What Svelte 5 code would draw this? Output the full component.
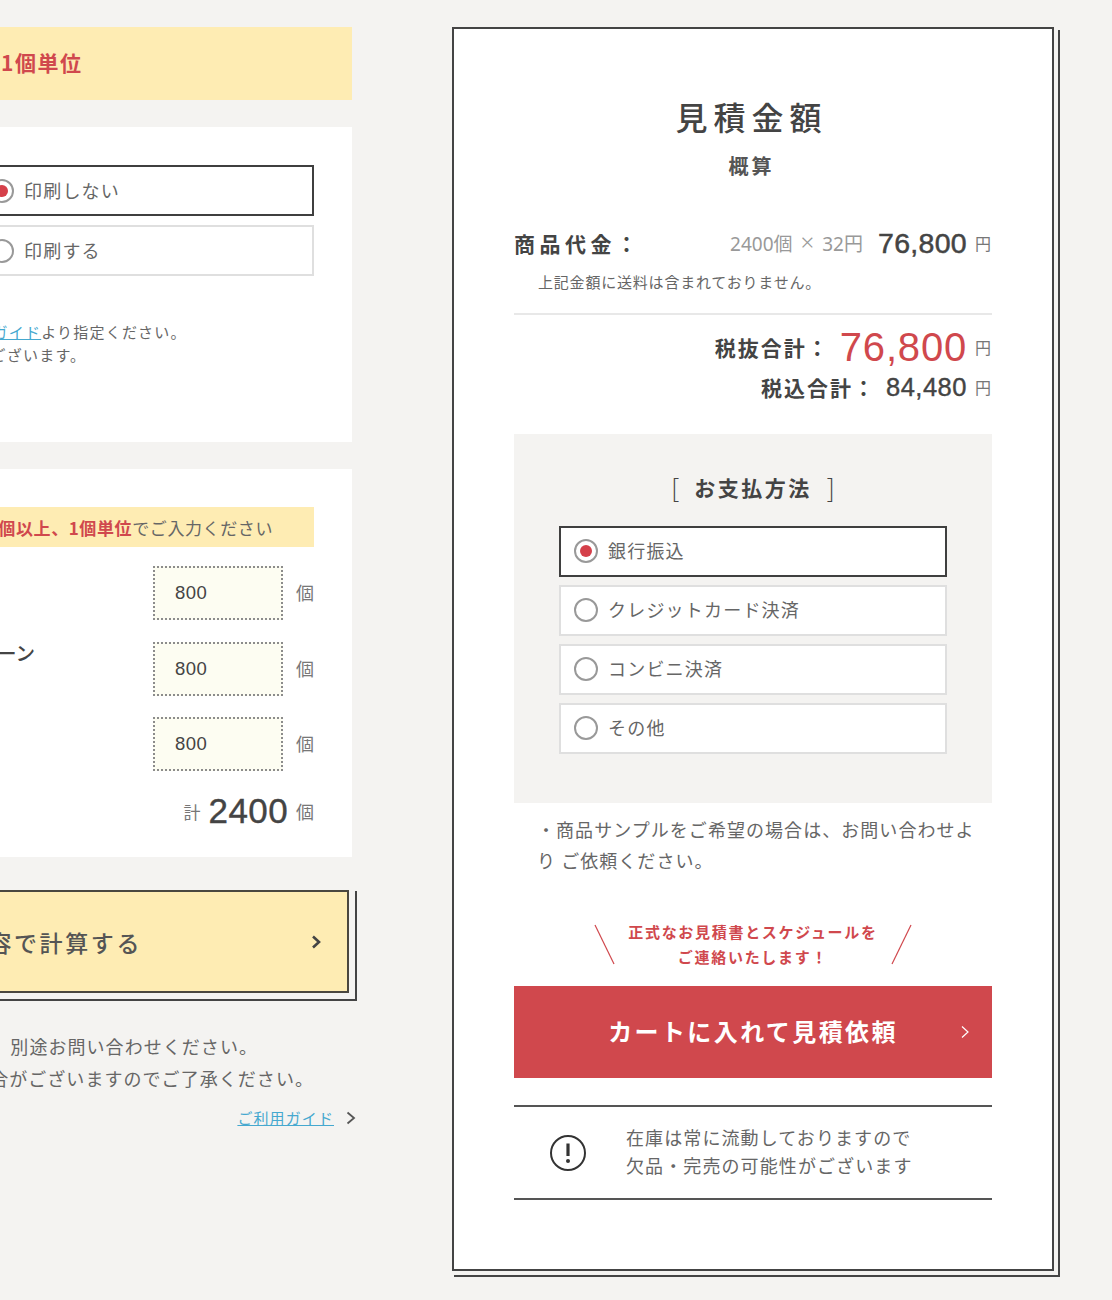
<script>
  const quantities = [800, 800, 800];

  const payments = ['銀行振込', 'クレジットカード決済', 'コンビニ決済', 'その他'];
</script>

<div class="page">
  <div class="left">
    <div class="banner">
      <span class="banner-text">1個単位</span>
    </div>

    <section class="panel print">
      <div class="option selected wide">
        <span class="radio on"></span>
        <span>印刷しない</span>
      </div>
      <div class="option wide">
        <span class="radio"></span>
        <span>印刷する</span>
      </div>
      <p class="print-note">
        <span class="line l1"><a href="#guide">ご利用ガイド</a>より指定ください。</span>
        <span class="line l2">場合がございます。</span>
      </p>
    </section>

    <section class="panel qty">
      <div class="strip"><b>100個以上、1個単位</b>でご入力ください</div>
      <div class="qty-rows">
        <div class="qty-names"><span>ブルーグリーン</span></div>
        <div class="qty-inputs">
          {#each quantities as q}
            <div class="qty-row">
              <input class="num" type="text" value={q} />
              <span class="unit">個</span>
            </div>
          {/each}
        </div>
      </div>
      <div class="qty-total">
        <span class="total-label">計</span>
        <span class="total-num">2400</span>
        <span class="unit">個</span>
      </div>
    </section>

    <button class="calc">
      <span>この内容で計算する</span>
      <svg width="12" height="16" viewBox="0 0 12 16"><path d="M3 2.5 L9 8 L3 13.5" fill="none" stroke="#444" stroke-width="2.6" /></svg>
    </button>

    <div class="foot">
      <p class="f1">別途お問い合わせください。</p>
      <p class="f2">場合がございますのでご了承ください。</p>
      <div class="guide">
        <a href="#guide">ご利用ガイド</a>
        <svg width="12" height="16" viewBox="0 0 12 16"><path d="M2.5 2.5 L9 8 L2.5 13.5" fill="none" stroke="#555" stroke-width="1.8" /></svg>
      </div>
    </div>
  </div>

  <aside class="card">
    <h2>見積金額</h2>
    <p class="sub">概算</p>

    <div class="price-row">
      <span class="price-label">商品代金：</span>
      <span class="calc-text">2400個<span class="times">×</span>32円</span>
      <span class="price">76,800</span>
      <span class="yen">円</span>
    </div>
    <p class="ship">上記金額に送料は含まれておりません。</p>

    <div class="sum-row first">
      <span class="sum-label">税抜合計：</span>
      <span class="sum-red">76,800</span>
      <span class="yen">円</span>
    </div>
    <div class="sum-row second">
      <span class="sum-label">税込合計：</span>
      <span class="sum-tax">84,480</span>
      <span class="yen">円</span>
    </div>

    <div class="pay">
      <h3><span>[</span><span>お支払方法</span><span>]</span></h3>
      <div class="pay-list">
        {#each payments as p, i}
          <div class="option" class:selected={i === 0}>
            <span class="radio" class:on={i === 0}></span>
            <span>{p}</span>
          </div>
        {/each}
      </div>
    </div>

    <p class="sample">・商品サンプルをご希望の場合は、お問い合わせより ご依頼ください。</p>

    <div class="notice">
      <svg width="21" height="41" viewBox="0 0 21 41"><path d="M1 1 L20 40" stroke="#d0484d" stroke-width="1.2" /></svg>
      <p>正式なお見積書とスケジュールを<br />ご連絡いたします！</p>
      <svg width="21" height="41" viewBox="0 0 21 41"><path d="M20 1 L1 40" stroke="#d0484d" stroke-width="1.2" /></svg>
    </div>

    <button class="cart">
      <span>カートに入れて見積依頼</span>
      <svg class="cart-arrow" width="10" height="14" viewBox="0 0 10 14"><path d="M2 1.5 L8 7 L2 12.5" fill="none" stroke="#fff" stroke-width="1.2" /></svg>
    </button>

    <div class="stock">
      <svg width="38" height="38" viewBox="0 0 38 38">
        <circle cx="19" cy="19" r="17" fill="none" stroke="#333" stroke-width="2" />
        <path d="M19 9.5 V22" stroke="#333" stroke-width="3.2" />
        <circle cx="19" cy="27" r="2" fill="#333" />
      </svg>
      <p>在庫は常に流動しておりますので<br />欠品・完売の可能性がございます</p>
    </div>
  </aside>
</div>

<style>
  :global(body) {
    margin: 0;
    background: #f4f3f1;
    font-family: "Noto Sans CJK JP", "Noto Sans", sans-serif;
    color: #444;
  }

  .page {
    width: 1112px;
    height: 1300px;
    overflow: hidden;
    display: flex;
    align-items: flex-start;
    padding-top: 27px;
    box-sizing: border-box;
  }

  .left {
    flex: none;
    width: 352px;
    margin-right: 100px;
  }

  .banner {
    height: 73px;
    background: #feecb3;
    display: flex;
    align-items: center;
    padding: 0 0 4px 1px;
    box-sizing: border-box;
  }

  .banner-text {
    color: #d0484d;
    font-size: 21px;
    font-weight: 700;
    letter-spacing: 1.5px;
  }

  .panel {
    background: #fff;
    position: relative;
  }

  .print {
    margin-top: 27px;
    height: 315px;
    padding: 38px 38px 0 0;
    box-sizing: border-box;
    overflow: hidden;
    display: flex;
    flex-direction: column;
    align-items: flex-end;
    gap: 9px;
  }

  .option {
    display: flex;
    align-items: center;
    gap: 10px;
    height: 50px;
    padding: 0 0 2px 13px;
    box-sizing: border-box;
    border: 2px solid #dfdfdf;
    background: #fff;
    color: #666;
    font-size: 18px;
    letter-spacing: 1.2px;
    flex: none;
  }

  .option .radio {
    margin-top: 2px;
  }

  .option.selected {
    border-color: #3f3f3f;
  }

  .wide {
    width: 339px;
    height: 51px;
  }

  .radio {
    flex: none;
    width: 24px;
    height: 24px;
    border-radius: 50%;
    border: 2px solid #999;
    box-sizing: border-box;
    background: #fff;
    position: relative;
  }

  .radio.on::after {
    content: "";
    position: absolute;
    inset: 4px;
    border-radius: 50%;
    background: #d5404a;
  }

  .print-note {
    align-self: stretch;
    margin: 35px -38px 0 0;
    font-size: 15px;
    line-height: 23px;
    letter-spacing: 1.2px;
    color: #666;
  }

  .line {
    display: block;
    white-space: nowrap;
  }

  .l1 { margin-left: -56px; }
  .l2 { margin-left: -58px; }

  a {
    color: #45a8cf;
    text-decoration: underline;
  }

  .qty {
    margin-top: 27px;
    height: 388px;
    padding: 38px 38px 0 0;
    box-sizing: border-box;
    overflow: hidden;
  }

  .strip {
    height: 40px;
    background: #feecb3;
    display: flex;
    align-items: center;
    justify-content: flex-end;
    padding-right: 41px;
    font-size: 17px;
    letter-spacing: 0.6px;
    color: #666;
    white-space: nowrap;
  }

  .strip b {
    color: #d0484d;
    font-weight: 700;
  }

  .qty-rows {
    display: flex;
    justify-content: space-between;
    align-items: flex-start;
    margin-top: 19px;
  }

  .qty-names {
    display: flex;
    justify-content: flex-end;
    width: 35px;
    overflow: hidden;
    white-space: nowrap;
    font-size: 19.5px;
    font-weight: 500;
    color: #444;
    margin-top: 72px;
  }

  .qty-names span {
    flex: none;
  }

  .qty-inputs {
    display: flex;
    flex-direction: column;
    gap: 21.5px;
  }

  .qty-row {
    display: flex;
    align-items: center;
    gap: 13px;
  }

  .qty-row .unit {
    margin-top: -2px;
  }

  .num {
    width: 130px;
    height: 54px;
    box-sizing: border-box;
    border: 2px dotted #8c8c8c;
    background: #fdfdf2;
    padding: 0 0 0 20px;
    font-family: "Liberation Sans", Arial, sans-serif;
    font-size: 18.5px;
    color: #444;
    letter-spacing: 0.4px;
    outline: none;
    border-radius: 0;
  }

  .unit {
    font-size: 18px;
    color: #777;
    width: 18px;
  }

  .qty-total {
    display: flex;
    justify-content: flex-end;
    align-items: center;
    gap: 8px;
    margin-top: 20px;
  }

  .total-label {
    font-size: 17px;
    color: #777;
  }

  .total-num {
    font-family: "Liberation Sans", Arial, sans-serif;
    font-size: 35px;
    font-weight: 400;
    color: #444;
    -webkit-text-stroke: 0.4px #444;
    letter-spacing: 0.4px;
  }

  .calc {
    display: flex;
    align-items: center;
    justify-content: flex-end;
    width: 349px;
    height: 103px;
    margin: 33px 0 0 0;
    padding: 0 25px 0 0;
    gap: 168px;
    box-sizing: border-box;
    background: #feecb3;
    border: 2px solid #4a473f;
    border-left: none;
    position: relative;
    font-family: inherit;
    font-size: 23px;
    font-weight: 500;
    letter-spacing: 2.6px;
    color: #555;
    white-space: nowrap;
  }

  .calc span,
  .calc svg {
    flex: none;
  }

  .calc::after {
    content: "";
    position: absolute;
    top: -1px;
    left: 0;
    right: -10px;
    bottom: -10px;
    border-right: 2px solid #444;
    border-bottom: 2px solid #444;
    pointer-events: none;
  }

  .foot {
    margin-top: 37px;
    font-size: 18px;
    letter-spacing: 1.05px;
    color: #666;
  }

  .foot p {
    margin: 0;
    line-height: 32px;
    white-space: nowrap;
    display: flex;
    justify-content: flex-end;
  }

  .f1 { padding-right: 94px; }
  .f2 { padding-right: 38px; }

  .guide {
    display: flex;
    justify-content: flex-end;
    align-items: center;
    gap: 11px;
    width: 357px;
    margin-top: 13px;
    font-size: 15px;
    letter-spacing: 1.1px;
  }

  aside.card {
    flex: none;
    width: 602px;
    height: 1244px;
    box-sizing: border-box;
    background: #fff;
    border: 2px solid #444;
    position: relative;
    padding: 0 60px;
  }

  aside.card::after {
    content: "";
    position: absolute;
    top: 1px;
    left: 0;
    right: -8px;
    bottom: -8px;
    border-right: 2px solid #444;
    border-bottom: 2px solid #444;
    pointer-events: none;
  }

  h2 {
    margin: 65px 0 0;
    padding-right: 3px;
    text-align: center;
    font-size: 32px;
    font-weight: 500;
    letter-spacing: 6px;
    line-height: 44px;
    color: #444;
  }

  .sub {
    margin: 14px 0 0;
    padding-right: 3px;
    text-align: center;
    font-size: 20px;
    font-weight: 700;
    letter-spacing: 3px;
    line-height: 28px;
    color: #555;
  }

  .price-row {
    display: flex;
    align-items: center;
    margin-top: 45px;
    height: 36px;
    color: #444;
  }

  .price-label {
    font-size: 21px;
    font-weight: 700;
    letter-spacing: 4.5px;
    margin-right: auto;
  }

  .calc-text {
    font-family: "Noto Sans", "Noto Sans CJK JP", sans-serif;
    font-size: 19px;
    color: #999;
    margin-right: 15px;
  }

  .times {
    font-size: 24px;
    font-weight: 300;
    line-height: 1;
    margin: 0 8px;
  }

  .price {
    font-family: "Liberation Sans", Arial, sans-serif;
    font-size: 28.5px;
    font-weight: 400;
    -webkit-text-stroke: 0.5px #444;
    letter-spacing: 0.3px;
  }

  .yen {
    font-size: 16px;
    color: #777;
    margin: 0 1px 0 8px;
  }

  .ship {
    margin: 8px 0 0;
    padding: 0 0 18px 24px;
    font-size: 15px;
    letter-spacing: 0.8px;
    line-height: 26px;
    color: #666;
    border-bottom: 2px solid #e8e8e8;
  }

  .sum-row {
    display: flex;
    align-items: center;
    justify-content: flex-end;
  }

  .sum-row.first {
    margin-top: 10px;
    height: 44px;
  }

  .sum-row.second {
    height: 36px;
  }

  .sum-label {
    font-size: 21px;
    font-weight: 700;
    letter-spacing: 2px;
    color: #444;
  }

  .sum-red {
    font-family: "Liberation Sans", Arial, sans-serif;
    font-size: 40px;
    color: #d0484d;
    margin-left: 10px;
    letter-spacing: 0.8px;
  }

  .sum-tax {
    font-family: "Liberation Sans", Arial, sans-serif;
    font-size: 25.5px;
    color: #444;
    -webkit-text-stroke: 0.4px #444;
    margin-left: 10px;
    letter-spacing: 0.5px;
  }

  .pay {
    margin-top: 29px;
    height: 369px;
    padding-top: 32px;
    box-sizing: border-box;
    background: #f4f3f1;
  }

  h3 {
    margin: 0;
    display: flex;
    justify-content: center;
    align-items: center;
    gap: 15px;
    font-size: 21px;
    font-weight: 700;
    line-height: 42px;
    letter-spacing: 2.5px;
    color: #444;
  }

  h3 span:first-child,
  h3 span:last-child {
    font-size: 26px;
    font-weight: 300;
    letter-spacing: 0;
  }

  .pay-list {
    width: 388px;
    margin: 18px auto 0;
    display: flex;
    flex-direction: column;
    gap: 8.5px;
  }

  .pay-list .option {
    height: 50.5px;
  }

  .sample {
    margin: 11px 0 0;
    padding: 0 16px 0 23px;
    font-size: 18px;
    line-height: 31px;
    letter-spacing: 1.05px;
    color: #666;
  }

  .notice {
    display: flex;
    justify-content: center;
    align-items: center;
    gap: 13px;
    margin-top: 43px;
  }

  .notice p {
    margin: 0;
    text-align: center;
    color: #d0484d;
    font-size: 15px;
    font-weight: 700;
    line-height: 25px;
    letter-spacing: 1.7px;
  }

  .cart {
    display: block;
    width: 100%;
    height: 92px;
    margin-top: 17px;
    padding-bottom: 5px;
    border: none;
    background: #d0484d;
    color: #fff;
    font-family: inherit;
    font-size: 24px;
    font-weight: 700;
    letter-spacing: 2.4px;
    position: relative;
  }

  .cart-arrow {
    position: absolute;
    right: 22px;
    top: 39px;
  }

  .stock {
    display: flex;
    align-items: center;
    gap: 39px;
    margin-top: 27px;
    height: 95px;
    padding-left: 35px;
    box-sizing: border-box;
    border-top: 2px solid #555;
    border-bottom: 2px solid #555;
  }

  .stock p {
    margin: -4px 0 0;
    font-size: 18px;
    line-height: 28px;
    letter-spacing: 1.1px;
    color: #666;
  }
</style>
